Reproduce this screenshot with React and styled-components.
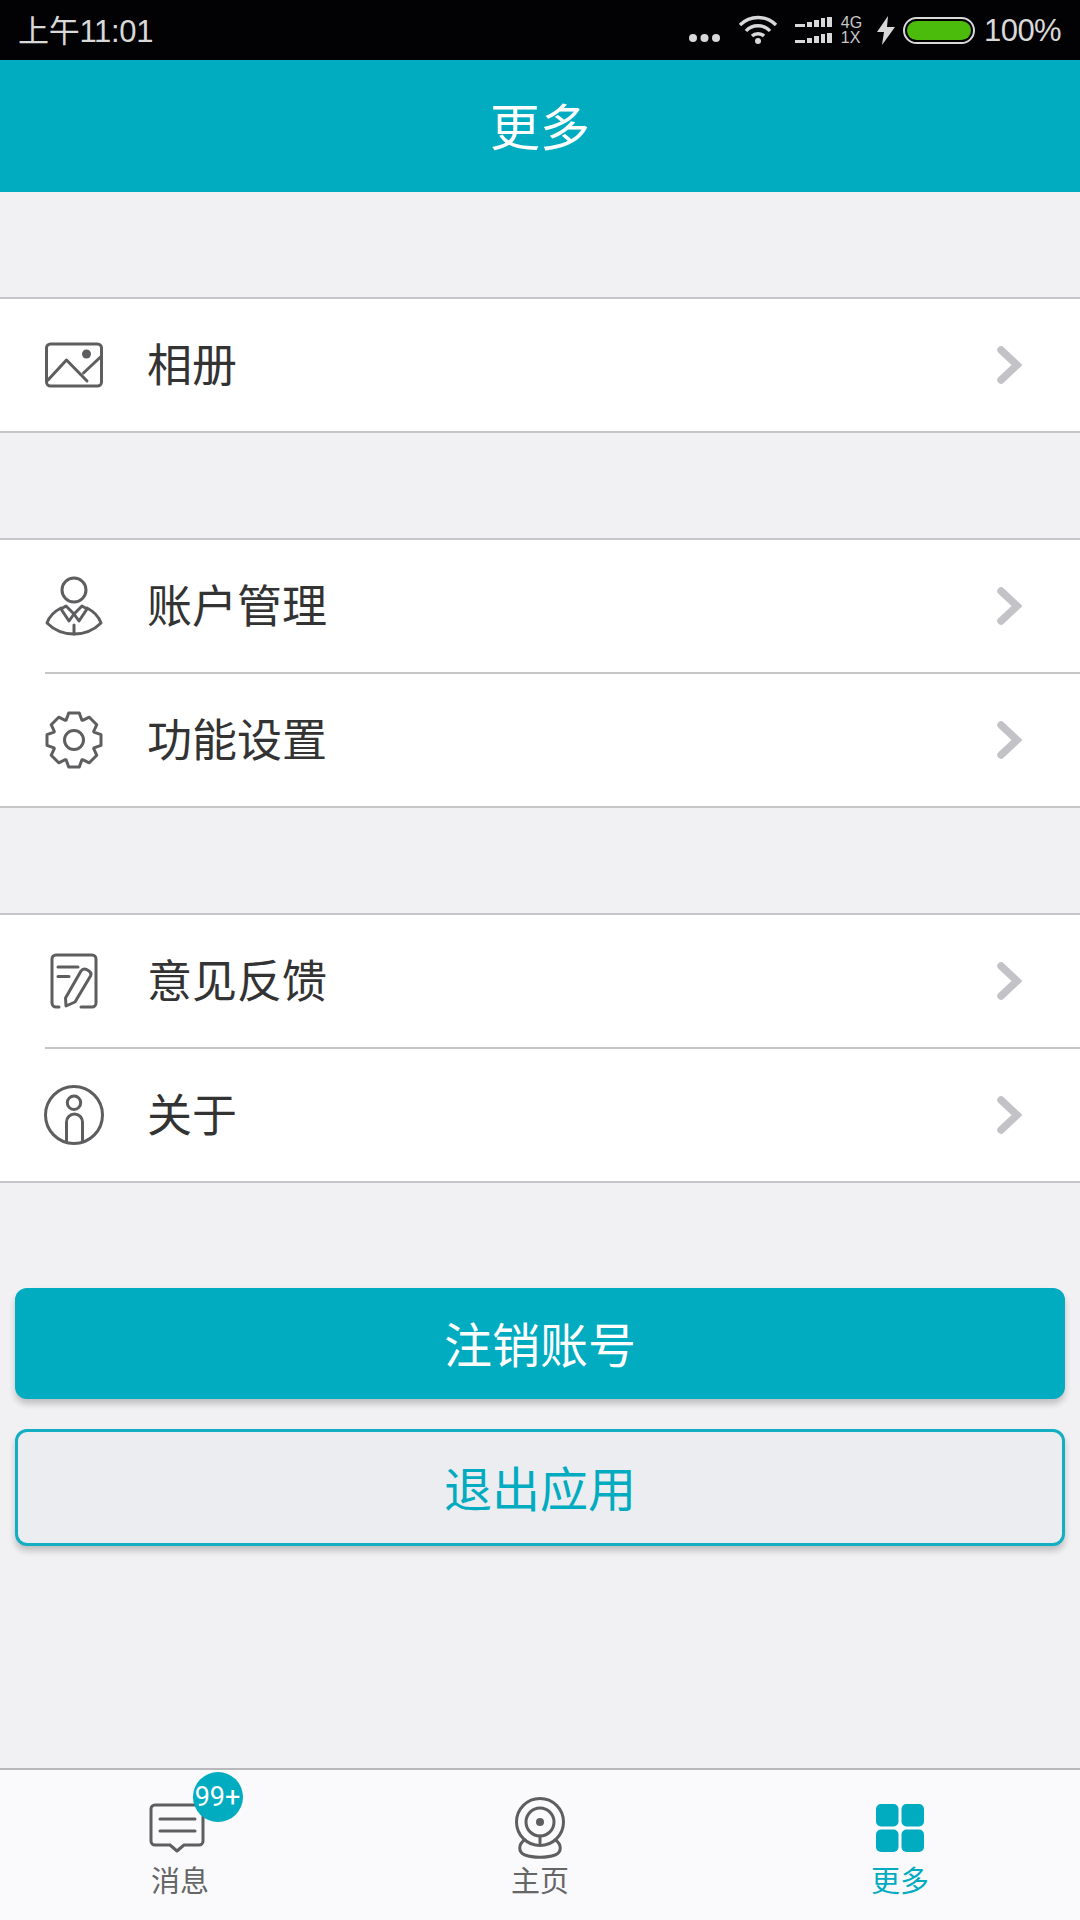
import React from 'react';
import styled, { createGlobalStyle } from 'styled-components';

const GlobalStyle = createGlobalStyle`
  html, body { margin: 0; padding: 0; }
  body {
    width: 1080px;
    height: 1920px;
    overflow: hidden;
    font-family: "Noto Sans CJK SC", "Noto Sans", sans-serif;
  }
  * { box-sizing: border-box; }
`;

const TEAL = '#01abc0';
const ICON_GREY = '#5e5e60';

const Page = styled.div`
  width: 1080px;
  height: 1920px;
  display: flex;
  flex-direction: column;
  background: #f1f1f4;
`;

const StatusBar = styled.div`
  height: 60px;
  flex: none;
  background: #020204;
  color: #d8d8d8;
  display: flex;
  align-items: center;
  justify-content: space-between;
  padding: 0 19px 0 18px;
  font-family: "Liberation Sans", "Noto Sans CJK SC", sans-serif;
`;

const Clock = styled.span`
  font-size: 31px;
  letter-spacing: -0.3px;
  padding-bottom: 4px;
  font-family: "Liberation Sans", "Noto Sans CJK SC", sans-serif;
`;

const StatusIcons = styled.div`
  display: flex;
  align-items: center;
`;

const NetLabel = styled.span`
  display: flex;
  flex-direction: column;
  font-size: 16px;
  line-height: 15px;
  margin: 0 15px 0 8px;
  color: #c8c8c8;
`;

const BatteryText = styled.span`
  font-size: 31px;
  letter-spacing: -0.6px;
  margin-left: 9px;
  padding-top: 2px;
`;

const Header = styled.header`
  height: 132px;
  flex: none;
  background: ${TEAL};
  color: #fff;
  font-size: 50px;
  padding-bottom: 4px;
  display: flex;
  align-items: center;
  justify-content: center;
`;

const Main = styled.main`
  flex: 1;
  display: flex;
  flex-direction: column;
  padding-top: 105px;
`;

const Group = styled.section`
  background: #fff;
  border-top: 2px solid #c6c6c8;
  border-bottom: 2px solid #c6c6c8;
  margin-bottom: 105px;
`;

const Row = styled.div`
  height: ${(p) => (p.$divided ? '134px' : '132px')};
  display: flex;
  align-items: center;
  margin-left: 45px;
  padding-right: 58px;
  color: #333;
  font-size: 45px;
  border-top: ${(p) => (p.$divided ? '2px solid #c6c6c8' : 'none')};
`;

const RowIcon = styled.svg`
  width: 60px;
  height: 60px;
  flex: none;
  margin: 0 43px 0 -1px;
  fill: none;
  stroke: ${ICON_GREY};
  stroke-width: 3;
  stroke-linecap: round;
  stroke-linejoin: round;
`;

const RowLabel = styled.span`
  flex: 1;
  padding-bottom: 5px;
`;

const Chevron = styled.svg`
  width: 26px;
  height: 38px;
  flex: none;
  fill: none;
  stroke: #c3c3c7;
  stroke-width: 7.5;
  stroke-linecap: round;
  stroke-linejoin: miter;
`;

const Buttons = styled.div`
  display: flex;
  flex-direction: column;
  gap: 30px;
  padding: 0 15px;
`;

const Button = styled.div`
  height: ${(p) => (p.$outline ? '117px' : '111px')};
  border-radius: 12px;
  padding-bottom: 4px;
  display: flex;
  align-items: center;
  justify-content: center;
  font-size: 48px;
  background: ${(p) => (p.$outline ? '#ecedf0' : TEAL)};
  color: ${(p) => (p.$outline ? TEAL : '#fff')};
  border: ${(p) => (p.$outline ? `3px solid #14aec2` : 'none')};
  box-shadow: 0 5px 6px rgba(0, 0, 0, 0.2);
`;

const TabBar = styled.nav`
  height: 152px;
  flex: none;
  display: flex;
  background: #fafafc;
  border-top: 2px solid #b8b8ba;
`;

const Tab = styled.div`
  flex: 1;
  display: flex;
  flex-direction: column;
  align-items: center;
  padding-top: 26px;
  color: ${(p) => (p.$active ? TEAL : '#666')};
  font-size: 29px;
`;

const TabIconSlot = styled.div`
  position: relative;
  height: 64px;
  display: flex;
  align-items: center;
  justify-content: center;
`;

const TabIcon = styled.svg`
  display: block;
  fill: none;
  stroke: ${ICON_GREY};
  stroke-width: 3;
  stroke-linecap: round;
  stroke-linejoin: round;
  margin-right: ${(p) => p.$shift || 0}px;
`;

const TabLabel = styled.span`
  line-height: 38px;
`;

const Badge = styled.span`
  position: absolute;
  left: 44px;
  top: -24px;
  width: 50px;
  height: 50px;
  border-radius: 50%;
  background: ${TEAL};
  color: #fff;
  font-family: Roboto, sans-serif;
  font-size: 27px;
  display: flex;
  align-items: center;
  justify-content: center;
`;

// gear outline, flat tooth on top
const gearPath = () => {
  const cx = 30, cy = 30, outer = 27.5, root = 21.5, teeth = 8;
  const pts = [];
  for (let i = 0; i < teeth; i++) {
    const a = (i / teeth) * Math.PI * 2 - Math.PI / 2;
    const step = (Math.PI * 2) / teeth;
    [[-0.5, root], [-0.26, outer], [0.26, outer], [0.5, root]].forEach(([k, r]) => {
      const t = a + k * step * 0.95;
      pts.push(`${(cx + r * Math.cos(t)).toFixed(1)} ${(cy + r * Math.sin(t)).toFixed(1)}`);
    });
  }
  return 'M' + pts.join('L') + 'Z';
};

const ImageIcon = () => (
  <RowIcon viewBox="0 0 60 60">
    <rect x="2.5" y="9" width="55" height="42" rx="4" />
    <path d="M4 45L22.5 25L43 46" />
    <path d="M39.5 38L56.5 22" />
    <circle cx="42.5" cy="19" r="4.5" fill={ICON_GREY} stroke="none" />
  </RowIcon>
);

const UserIcon = () => (
  <RowIcon viewBox="0 0 60 60">
    <circle cx="30" cy="14" r="12" />
    <path d="M17 32C11 35 5 41 3 47C10 54 20 58 30 58C40 58 50 54 57 47C55 41 49 35 43 32" />
    <path d="M17 33L22 30L30 38L25 45Z" />
    <path d="M43 33L38 30L30 38L35 45Z" />
    <path d="M30 49V58" />
  </RowIcon>
);

const GearIcon = () => (
  <RowIcon viewBox="0 0 60 60">
    <path d={gearPath()} />
    <circle cx="30" cy="30" r="9.5" />
  </RowIcon>
);

const FeedbackIcon = () => (
  <RowIcon viewBox="0 0 60 60">
    <path d="M15 56H12A4 4 0 0 1 8 52V8A4 4 0 0 1 12 4H48A4 4 0 0 1 52 8V52A4 4 0 0 1 48 56H37" />
    <path d="M14 16H34M14 25.5H25" />
    <path d="M22 55L21.5 47L37 20Q39 17 42.5 18.5L45 20Q48 22 46.5 25L31 51Z" />
  </RowIcon>
);

const InfoIcon = () => (
  <RowIcon viewBox="0 0 60 60">
    <circle cx="30" cy="30" r="28.5" />
    <circle cx="30" cy="17.7" r="6.7" />
    <path d="M22.5 56V37A8 8 0 0 1 38.5 37V56" />
  </RowIcon>
);

const RowArrow = () => (
  <Chevron viewBox="0 0 26 38">
    <path d="M5 4L21 19L5 34" />
  </Chevron>
);

const rows = [
  [{ icon: ImageIcon, label: '相册' }],
  [{ icon: UserIcon, label: '账户管理' }, { icon: GearIcon, label: '功能设置' }],
  [{ icon: FeedbackIcon, label: '意见反馈' }, { icon: InfoIcon, label: '关于' }],
];

const App = () => {
  return (
    <Page>
      <GlobalStyle />
      <StatusBar>
        <Clock>上午11:01</Clock>
        <StatusIcons>
          <svg width="33" height="10" viewBox="0 0 33 10" style={{ marginRight: 17, marginTop: 16 }}>
            <circle cx="5" cy="5" r="4" fill="#d8d8d8" />
            <circle cx="16.5" cy="5" r="4" fill="#d8d8d8" />
            <circle cx="28" cy="5" r="4" fill="#d8d8d8" />
          </svg>
          <svg width="40" height="30" viewBox="0 0 40 30" fill="none" stroke="#d8d8d8" strokeWidth="3.4" style={{ marginRight: 17 }}>
            <path d="M2 10C12 0 28 0 38 10" />
            <path d="M8 16C14 9 26 9 32 16" />
            <path d="M14 21C17 18 23 18 26 21" />
            <circle cx="20" cy="26" r="3" fill="#d8d8d8" stroke="none" />
          </svg>
          <svg width="38" height="27" viewBox="0 0 38 27" fill="#d8d8d8">
            <rect x="0" y="7" width="10" height="3" />
            <rect x="12" y="5" width="5" height="5" />
            <rect x="19" y="3" width="5" height="7" />
            <rect x="26" y="1" width="4" height="9" />
            <rect x="32" y="0" width="5" height="10" />
            <rect x="0" y="23" width="10" height="3" />
            <rect x="12" y="21" width="5" height="5" />
            <rect x="19" y="19" width="5" height="7" />
            <rect x="26" y="17" width="4" height="9" />
            <rect x="32" y="16" width="5" height="10" />
          </svg>
          <NetLabel>
            <span>4G</span>
            <span>1X</span>
          </NetLabel>
          <svg width="18" height="29" viewBox="0 0 18 29" fill="#d8d8d8" style={{ marginRight: 8 }}>
            <path d="M11 0L0 16H7L5 29L18 11H10Z" />
          </svg>
          <svg width="72" height="27" viewBox="0 0 72 27">
            <rect x="1" y="1" width="70" height="25" rx="12.5" fill="#000" stroke="#d8d8d8" strokeWidth="2" />
            <rect x="4" y="4" width="64" height="19" rx="9.5" fill="#4cbc0c" />
          </svg>
          <BatteryText>100%</BatteryText>
        </StatusIcons>
      </StatusBar>

      <Header>更多</Header>

      <Main>
        {rows.map((group, i) => (
          <Group key={i}>
            {group.map((row, j) => (
              <Row key={row.label} $divided={j > 0}>
                <row.icon />
                <RowLabel>{row.label}</RowLabel>
                <RowArrow />
              </Row>
            ))}
          </Group>
        ))}
        <Buttons>
          <Button>注销账号</Button>
          <Button $outline>退出应用</Button>
        </Buttons>
      </Main>

      <TabBar>
        <Tab>
          <TabIconSlot>
            <TabIcon width="56" height="50" viewBox="0 0 56 50" $shift={7}>
              <path d="M6 2H50A4 4 0 0 1 54 6V38A4 4 0 0 1 50 42H35L28 48L21 42H6A4 4 0 0 1 2 38V6A4 4 0 0 1 6 2Z" />
              <path d="M11 16H46M11 28H46" />
            </TabIcon>
            <Badge>99+</Badge>
          </TabIconSlot>
          <TabLabel>消息</TabLabel>
        </Tab>
        <Tab>
          <TabIconSlot>
            <TabIcon width="50" height="62" viewBox="0 0 50 62">
              <circle cx="25" cy="25" r="23.5" />
              <circle cx="25" cy="25" r="14" />
              <circle cx="25" cy="25" r="4" fill={ICON_GREY} stroke="none" />
              <path d="M25 39V46" />
              <path d="M10 43C3 47 3 55 10 58C18 61 32 61 40 58C47 55 47 47 40 43" />
            </TabIcon>
          </TabIconSlot>
          <TabLabel>主页</TabLabel>
        </Tab>
        <Tab $active>
          <TabIconSlot>
            <svg width="48" height="48" viewBox="0 0 48 48" fill={TEAL}>
              <rect x="0" y="0" width="22.5" height="22.5" rx="5" />
              <rect x="25.5" y="0" width="22.5" height="22.5" rx="5" />
              <rect x="0" y="25.5" width="22.5" height="22.5" rx="5" />
              <rect x="25.5" y="25.5" width="22.5" height="22.5" rx="5" />
            </svg>
          </TabIconSlot>
          <TabLabel>更多</TabLabel>
        </Tab>
      </TabBar>
    </Page>
  );
};

export default App;
